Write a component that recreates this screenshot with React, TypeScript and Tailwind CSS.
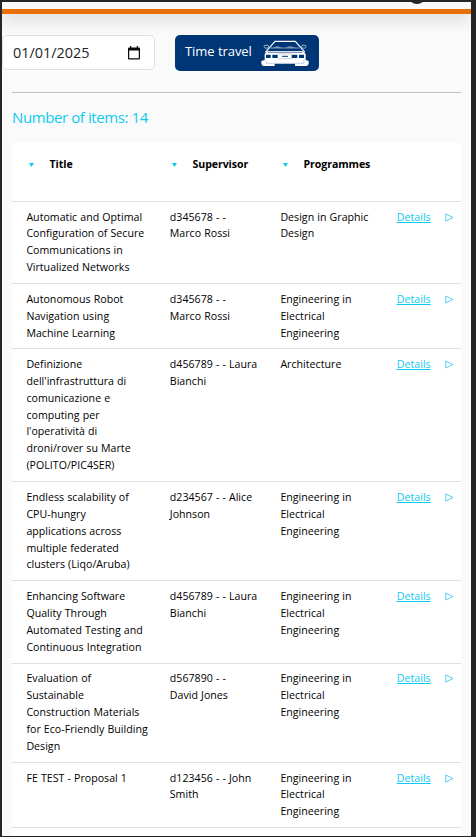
type Row = { title: string[]; supervisor: string[]; programme: string[]; box: string };

const electrical = ["Engineering in", "Electrical", "Engineering"];

const rows: Row[] = [
  { title: ["Automatic and Optimal", "Configuration of Secure", "Communications in", "Virtualized Networks"], supervisor: ["d345678 - -", "Marco Rossi"], programme: ["Design in Graphic", "Design"], box: "h-[82px] pt-[6.6px]" },
  { title: ["Autonomous Robot", "Navigation using", "Machine Learning"], supervisor: ["d345678 - -", "Marco Rossi"], programme: electrical, box: "h-[65px] pt-[7px]" },
  { title: ["Definizione", "dell'infrastruttura di", "comunicazione e", "computing per", "l'operatività di", "droni/rover su Marte", "(POLITO/PIC4SER)"], supervisor: ["d456789 - - Laura", "Bianchi"], programme: ["Architecture"], box: "h-[133px] pt-[7.3px]" },
  { title: ["Endless scalability of", "CPU-hungry", "applications across", "multiple federated", "clusters (Liqo/Aruba)"], supervisor: ["d234567 - - Alice", "Johnson"], programme: electrical, box: "h-[99px] pt-[7.3px]" },
  { title: ["Enhancing Software", "Quality Through", "Automated Testing and", "Continuous Integration"], supervisor: ["d456789 - - Laura", "Bianchi"], programme: electrical, box: "h-[83px] pt-[7.2px]" },
  { title: ["Evaluation of", "Sustainable", "Construction Materials", "for Eco-Friendly Building", "Design"], supervisor: ["d567890 - -", "David Jones"], programme: electrical, box: "h-[99px] pt-[6.4px]" },
  { title: ["FE TEST - Proposal 1"], supervisor: ["d123456 - - John", "Smith"], programme: electrical, box: "h-[65px] pt-[6.6px]" },
];

function Lines({ lines }: { lines: string[] }) {
  return (
    <div>
      {lines.map((line) => (
        <div key={line} className="whitespace-nowrap">{line}</div>
      ))}
    </div>
  );
}

function Car() {
  return (
    <svg className="h-[27px] w-12" viewBox="76 118 144 81" fill="none">
      <path d="M89 155 L118 122 H179 L208 155" stroke="#fff" strokeWidth="3.5" />
      <path d="M101 142 L97 134 H86 L85 138 L89 143 L102 141 M195 142 L199 134 H210 L211 138 L207 143 L194 141" stroke="#b9c8dc" strokeWidth="2.5" />
      <path d="M112 142 Q124 131 139 142 M150 142 Q162 131 180 142" fill="#7e98bc" />
      <path d="M104 142 H192" stroke="#7e98bc" strokeWidth="3" />
      <path d="M96 151 H201 L210 160 V178 L219 181 V190 L214 196 H178 V189 H117 V196 H82 L77 190 V181 L87 178 V160 Z" fill="#fff" />
      <path d="M97 155 H200" stroke="#7e98bc" strokeWidth="4" />
      <path d="M91 162 H105 V172 H91 Z M110 162 H126 V172 H110 Z M168 162 H185 V172 H168 Z M190 162 H205 V172 H190 Z" fill="#003576" />
      <path d="M139 167 H157" stroke="#003576" strokeWidth="3" />
      <path d="M126 160 H168 M128 174 H168" stroke="#8ca3c3" strokeWidth="1.5" />
      <path d="M91 177 V188 H205 V177" stroke="#a9bad1" strokeWidth="2" />
    </svg>
  );
}

export default function App() {
  return (
    <div className="h-[837px] w-[476px] overflow-hidden bg-[#262626] pt-0.5 pl-0.5 font-['Open_Sans','Noto_Sans',sans-serif] text-black">
      <div className="h-[834px] w-[469px] overflow-hidden bg-[#fafafa]">
        <header className="relative h-3 border-b-[5px] border-[#e87007] shadow-[0_6px_16px_rgba(0,0,0,0.14)]">
          <div className="absolute -top-4 left-[406px] size-[18px] rounded-full bg-[#212529]" />
        </header>
        <div className="mt-[21px] flex h-9 items-start">
          <div className="flex h-[35px] w-[153px] items-center justify-between rounded-[5px] border border-[#dee2e6] bg-white pr-[14px] pl-[10px] text-[#212529]">
            <span className="text-[14.4px] tracking-[0.02px]">01/01/2025</span>
            <svg className="h-[14px] w-3" viewBox="0 0 12 14">
              <path d="M1 1.5 H2 V0 H3.3 V1.5 H8.7 V0 H10 V1.5 H11 Q12 1.5 12 2.5 V12 Q12 13.5 11 13.5 H1 Q0 13.5 0 12.5 V2.5 Q0 1.5 1 1.5 M1.2 4.5 V12.2 H10.8 V4.5 Z" fill="#080808" fillRule="evenodd" />
            </svg>
          </div>
          <button className="ml-5 flex h-9 w-36 items-center rounded-[5px] bg-[#003576] pl-[10px] text-white">
            <span className="w-[76px] pb-[3px] text-left text-[13px] tracking-[-0.05px] whitespace-nowrap">Time travel</span>
            <Car />
          </button>
        </div>
        <div className="mx-[10px] mt-[21px] h-px bg-[#c2c2c3]" />
        <h1 className="mt-[13px] ml-[10px] h-[22px] text-[15px] leading-[22px] tracking-[-0.4px] whitespace-nowrap text-[#0dcaf0]">Number of items: 14</h1>
        <section className="mt-[15px] mr-[10px] ml-[10px] bg-white text-[10.6px] leading-[16.8px]">
          <div className="grid h-[59px] grid-cols-[143px_111px_1fr] border-b border-[#dee2e6] pt-[13px] pl-[16px] font-bold">
            {["Title", "Supervisor", "Programmes"].map((label) => (
              <div key={label} className="flex h-[17px] items-center">
                <svg className="ml-[0.5px] h-1 w-[5px]" viewBox="0 0 5 4"><path d="M0 0 H5 L2.5 4 Z" fill="#0dcaf0" /></svg>
                <span className="ml-4 tracking-[-0.08px]">{label}</span>
              </div>
            ))}
          </div>
          {rows.map((row) => (
            <div key={row.title[0]} className={`${row.box} grid grid-cols-[143.4px_110.6px_116.4px_48px_1fr] border-b border-[#dee2e6] pl-[14.4px] tracking-[0.03px] [word-spacing:0.3px]`}>
              <Lines lines={row.title} />
              <Lines lines={row.supervisor} />
              <Lines lines={row.programme} />
              <a className="text-[#0dcaf0] underline decoration-1 underline-offset-1">Details</a>
              <svg className="mt-[4px] h-[9px] w-[9px]" viewBox="0 0 9 9" fill="none"><path d="M.8 1 V8 L8 4.5 Z" stroke="#43c5ee" strokeWidth=".9" /></svg>
            </div>
          ))}
          <div className="h-10" />
        </section>
      </div>
    </div>
  );
}
